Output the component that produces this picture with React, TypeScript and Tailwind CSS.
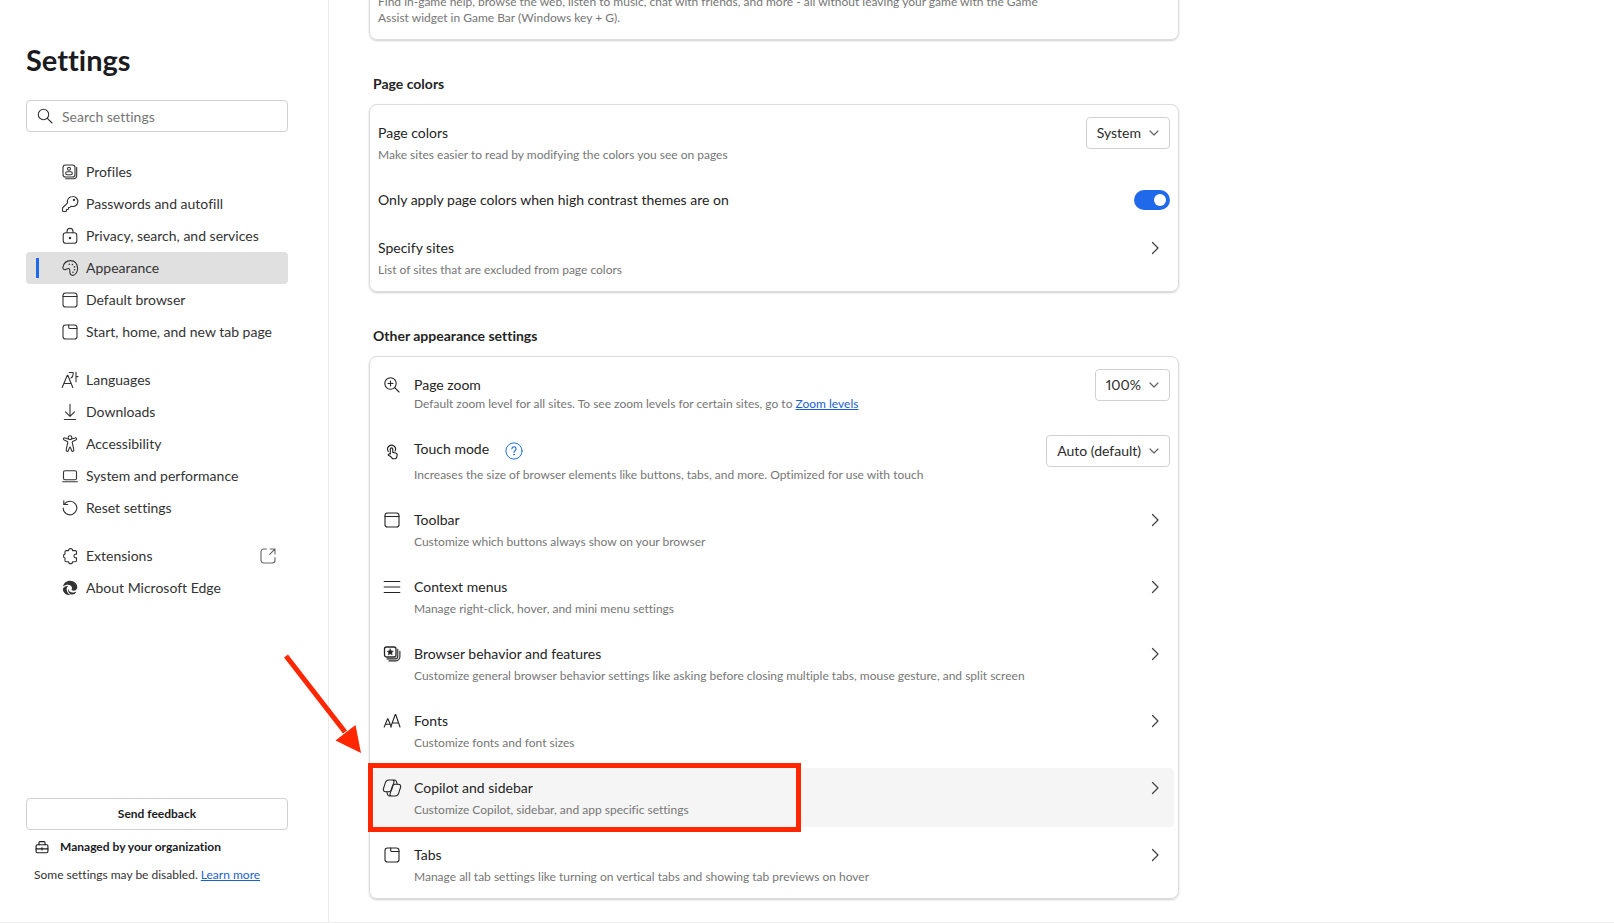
import type { ReactNode } from "react";

function Icon({ children, className = "size-5" }: { children: ReactNode; className?: string }) {
  return (
    <svg
      viewBox="0 0 20 20"
      className={`shrink-0 ${className}`}
      fill="none"
      stroke="currentColor"
      strokeWidth="1.1"
      strokeLinecap="round"
      strokeLinejoin="round"
      aria-hidden="true"
    >
      {children}
    </svg>
  );
}

const copilotHalf =
  "M7 2h3.300c1.600 0 2 1 1.600 2.400L9.700 11.600c-.4 1.400-1.300 2.100-2.700 2.100H3.800c-2 0-2.900-1.300-2.300-3.200L3.400 4.600C3.900 2.900 5.100 2 7 2ZM9.500 2h2.900c1.200 0 1.800.6 2.100 1.700l.7 2.600";

const icons = {
  search: (
    <>
      <circle cx="8.5" cy="8.5" r="5.2" />
      <path d="M12.4 12.4 17 17" />
    </>
  ),
  profiles: (
    <>
      <rect x="3" y="3" width="12" height="12" rx="2.6" />
      <path d="M16.7 5.2v8.3a3.2 3.2 0 0 1-3.2 3.2H5.6" />
      <circle cx="9" cy="6.8" r="1.5" />
      <rect x="5.7" y="9.7" width="6.6" height="3" rx="1.5" />
    </>
  ),
  key: (
    <>
      <path d="M12.4 2.5a5 5 0 0 0-4.8 6.4L2.9 13.5c-.3.3-.4.6-.4 1v2c0 .6.4 1 1 1h2c.5 0 1-.4 1-1v-1h1c.5 0 1-.4 1-1v-1h1c.3 0 .5-.1.7-.3l1-1A5 5 0 1 0 12.4 2.5Z" />
      <circle cx="14" cy="6" r=".6" fill="currentColor" />
    </>
  ),
  lock: (
    <>
      <rect x="3.2" y="6.8" width="13.6" height="10.5" rx="2.6" />
      <path d="M7 6.800V5.400a3 3 0 0 1 6 0v1.400" />
      <circle cx="10" cy="12" r=".7" fill="currentColor" />
    </>
  ),
  palette: (
    <>
      <path d="M2.800 9.600C3.600 5 7 2.600 10.600 2.600c4.400 0 7 3.400 7 7.600 0 4-2.400 7.200-5 7.200-2 0-2.700-1.400-2.700-3.300 0-1.600.2-3.100-1-3.500-1.400-.5-2.300 1-3.900 1-1.300 0-2.300-.7-2.200-2Z" />
      <g fill="currentColor" stroke="none">
        <circle cx="9.3" cy="6.3" r=".8" />
        <circle cx="12.4" cy="6.5" r=".8" />
        <circle cx="14.5" cy="8.9" r=".8" />
        <circle cx="14.5" cy="11.8" r=".8" />
        <circle cx="12.9" cy="14.2" r=".8" />
      </g>
    </>
  ),
  browser: (
    <>
      <rect x="3" y="3" width="14" height="14" rx="2.6" />
      <path d="M3 6.500h14" />
    </>
  ),
  tab: (
    <>
      <rect x="3" y="3" width="14" height="14" rx="2.6" />
      <path d="M8.700 3v2.200c0 .7.500 1.300 1.300 1.300h7" />
    </>
  ),
  language: (
    <>
      <path d="M2.200 17.500 7.300 5.200h.5l5 12.300M4 13.500h7.200" />
      <path d="M9.300 2.500h3.900v1.300c0 2-.7 3.300-2.200 4.200M16 2.200v9.500M16 6.600h2" />
    </>
  ),
  download: (
    <>
      <path d="M10 2.300v11.800M5.500 9.900 10 14.300l4.500-4.400" />
      <path d="M4.300 17.500h11.400" />
    </>
  ),
  accessibility: (
    <>
      <circle cx="10" cy="3.7" r="1.9" />
      <path d="M8.300 5 5.100 3.900c-1.500-.6-2.500 1.500-.9 2.200l3.100 1.300c.4.200.6.500.5 1L6.200 15.700c-.5 1.700 1.600 2.300 2.200.8l1.200-3.100c.1-.4.700-.4.800 0l1.200 3.100c.6 1.500 2.700.9 2.200-.8l-1.600-7.300c-.1-.5.100-.8.500-1l3.100-1.300c1.600-.7.600-2.800-.9-2.200L11.700 5" />
    </>
  ),
  laptop: (
    <>
      <rect x="3.5" y="4.7" width="13" height="9" rx="1.5" />
      <path d="M2.600 15.700h14.800" />
    </>
  ),
  reset: (
    <>
      <path d="M4.300 6.300A6.800 6.800 0 1 1 3.200 10" />
      <path d="M3.800 2.700v3.800h3.900" />
    </>
  ),
  puzzle: (
    <path d="M8.600 4.600a2 2 0 0 1 4 0h2.700c.7 0 1.200.5 1.200 1.200v2.500h-.8a1.800 1.800 0 0 0 0 3.600h.8v2.600c0 .7-.5 1.200-1.200 1.200h-2.700a2 2 0 0 1-4 0H6.200c-.7 0-1.200-.5-1.200-1.200V12a2 2 0 0 1 0-3.900V5.800c0-.7.500-1.200 1.200-1.200Z" />
  ),
  edge: (
    <g stroke="none" fill="currentColor">
      <path d="M3 8.600C3.600 5 6.500 2.700 10 2.700c4.400 0 7.300 3.200 7.300 6.400 0 2.200-1.700 3.700-3.700 3.700-1.400 0-2.300-.6-2.100-1.200.8-.8.700-2.700-.4-3.700C9 6 5.500 6.400 3 8.600Z" />
      <path d="M2.800 11c1-2.400 3.500-3.500 5.400-3-1.500 1.200-1.900 3.300-1.200 5.200.7 1.900 2.200 3.300 4 3.800-4 .7-8.100-1.800-8.200-6Z" />
      <path d="M8.100 10.700c.3 2.600 3 4.200 5.700 3.700 1-.2 1.900-.5 2.600-1-.7 1.600-2.200 3-4 3.200-2.700-.3-5-3-4.300-5.900Z" />
    </g>
  ),
  external: (
    <>
      <path d="M8.500 3H5.700A2.700 2.700 0 0 0 3 5.700v8.600A2.700 2.700 0 0 0 5.700 17h8.600a2.700 2.700 0 0 0 2.700-2.700v-2.800" />
      <path d="M12 3h5v5M17 3l-5.300 5.300" />
    </>
  ),
  briefcase: (
    <>
      <rect x="2.6" y="7.2" width="14.8" height="10" rx="1.5" strokeWidth="1.4" />
      <path
        d="M6.200 7.200V4.600c0-.8.500-1.300 1.300-1.300h5c.8 0 1.300.5 1.300 1.300v2.600M2.600 12.300h14.800M10 10.800v3"
        strokeWidth="1.4"
      />
    </>
  ),
  zoom: (
    <>
      <circle cx="8.5" cy="8.5" r="5.7" />
      <path d="M12.700 12.700 17 17M8.500 6v5M6 8.500h5" />
    </>
  ),
  touch: (
    <g transform="translate(1 2.200) scale(.88)" strokeWidth="1.3">
      <path d="M8.300 12.300V6.700a1.400 1.400 0 0 1 2.800 0v3.700l3.200.8c1.300.3 2 1.300 1.700 2.600l-.5 2.200c-.3 1.100-1 1.700-2 1.700h-1.600c-.7 0-1.200-.2-1.600-.8-1-1.500-2-2.300-3.700-2.900-.8-.3-.8-1.100-.2-1.500.6-.5 1.300-.5 1.900-.2Z" />
      <path d="M6 9.300a4.500 4.500 0 1 1 7.700-.4" />
    </g>
  ),
  menu: <path d="M2.200 4.500h15.600M2.200 10h15.600M2.200 15.500h15.600" strokeWidth="1.2" />,
  features: (
    <>
      <rect x="2.5" y="3" width="11.5" height="10" rx="2" strokeWidth="1.3" />
      <path d="M15.800 5.200v7a2.700 2.700 0 0 1-2.700 2.700H5M17.900 7.200v5.500a4.200 4.200 0 0 1-4.200 4.200H7" />
      <path
        d="m8.250 5 .9 1.900 2.100.3-1.500 1.500.4 2.100-1.900-1-1.900 1 .4-2.100-1.500-1.500 2.100-.3Z"
        fill="currentColor"
        strokeWidth=".6"
      />
    </>
  ),
  fonts: (
    <path d="M2.200 16 5.600 7.700h.3L9.300 16M3.400 13.200h4.700M8.700 16l4.600-12.500h.4L18 16M10.100 12h6.500" />
  ),
  copilot: (
    <>
      <path d={copilotHalf} />
      <path d={copilotHalf} transform="rotate(180 10 10)" />
    </>
  ),
  help: (
    <>
      <circle cx="10" cy="10" r="9" />
      <path d="M7.700 7.600a2.300 2.300 0 1 1 3.500 2c-.8.500-1.200 1-1.200 1.900" strokeWidth="1.3" />
      <circle cx="10" cy="14" r=".5" fill="currentColor" />
    </>
  ),
  chevronRight: <path d="m7.500 4.500 5.500 5.500-5.500 5.500" strokeWidth="1.3" />,
  chevronDown: <path d="m6 8 4 4 4-4" strokeWidth="1.2" />,
};

type IconName = keyof typeof icons;

const navGroups: { label: string; icon: IconName; external?: boolean }[][] = [
  [
    { label: "Profiles", icon: "profiles" },
    { label: "Passwords and autofill", icon: "key" },
    { label: "Privacy, search, and services", icon: "lock" },
    { label: "Appearance", icon: "palette" },
    { label: "Default browser", icon: "browser" },
    { label: "Start, home, and new tab page", icon: "tab" },
  ],
  [
    { label: "Languages", icon: "language" },
    { label: "Downloads", icon: "download" },
    { label: "Accessibility", icon: "accessibility" },
    { label: "System and performance", icon: "laptop" },
    { label: "Reset settings", icon: "reset" },
  ],
  [
    { label: "Extensions", icon: "puzzle", external: true },
    { label: "About Microsoft Edge", icon: "edge" },
  ],
];

function Sidebar() {
  return (
    <aside className="sticky top-0 flex h-[922px] max-h-screen w-[329px] shrink-0 flex-col border-r border-[#ebebeb] pr-10 pl-[26px]">
      <h1 className="mt-10 text-[29px] leading-10 font-bold text-[#1b1b1f]">Settings</h1>
      <div className="mt-5 flex h-8 shrink-0 items-center gap-[7px] rounded border border-[#d1d1d1] px-2">
        <Icon className="size-5 text-[#333]">{icons.search}</Icon>
        <input
          type="text"
          aria-label="Search settings"
          placeholder="Search settings"
          className="h-full min-w-0 flex-1 bg-transparent text-sm outline-none placeholder:text-[#767676]"
        />
      </div>
      <nav className="mt-6 flex flex-col gap-4">
        {navGroups.map((group, i) => (
          <ul key={i}>
            {group.map((item) => {
              const active = item.label === "Appearance";
              return (
                <li key={item.label}>
                  <a
                    href="#"
                    aria-current={active ? "page" : undefined}
                    className={`flex h-8 items-center rounded px-[10px] text-sm text-[#333] ${active ? "bg-[#e0e0e0]" : ""}`}
                  >
                    <span className={`h-5 w-[3px] ${active ? "bg-[#2169eb]" : ""}`} />
                    <Icon className="mr-[6px] ml-[21px] size-5">{icons[item.icon]}</Icon>
                    <span className="flex-1">{item.label}</span>
                    {item.external && <Icon className="size-5 text-[#666]">{icons.external}</Icon>}
                  </a>
                </li>
              );
            })}
          </ul>
        ))}
      </nav>
      <div className="mt-auto pb-[39px] text-xs text-[#1b1b1f]">
        <button type="button" className="h-8 w-full rounded border border-[#d1d1d1] font-bold">
          Send feedback
        </button>
        <div className="mt-[9px] flex items-center gap-[10px] pl-2 font-bold">
          <Icon className="size-4">{icons.briefcase}</Icon>
          Managed by your organization
        </div>
        <p className="mt-3 pl-2 text-[#333]">
          Some settings may be disabled.{" "}
          <a href="#" className="text-[#1a5fd0] underline">
            Learn more
          </a>
        </p>
      </div>
    </aside>
  );
}

function Card({ children, className = "pt-2 pb-1" }: { children: ReactNode; className?: string }) {
  return (
    <div
      className={`flex flex-col gap-2 rounded-lg border border-[#dcdcdc] px-1 shadow-[0_1px_2px_rgba(0,0,0,0.2)] ${className}`}
    >
      {children}
    </div>
  );
}

function Select({ id, label, options }: { id: string; label: string; options: string[] }) {
  return (
    <div className="relative shrink-0">
      <select
        id={id}
        aria-label={label}
        className="[field-sizing:content] h-8 appearance-none rounded border border-[#d1d1d1] bg-white pr-7 pl-[10px] text-sm text-[#2b2b2b] proportional-nums"
      >
        {options.map((option) => (
          <option key={option}>{option}</option>
        ))}
      </select>
      <Icon className="pointer-events-none absolute top-[6px] right-[6px] size-5 text-[#666]">
        {icons.chevronDown}
      </Icon>
    </div>
  );
}

const titleClass = "block text-sm leading-5 text-[#242424]";
const descClass = "block text-xs leading-4 text-[#767676]";

function LinkRow({
  icon,
  title,
  description,
  active,
  children,
}: {
  icon?: IconName;
  title: string;
  description: string;
  active?: boolean;
  children?: ReactNode;
}) {
  return (
    <div className="relative">
      <a
        href="#"
        className={`flex h-[59px] items-start rounded-sm pt-[10px] pr-[9px] ${icon ? "pl-2" : "pl-1"} ${active ? "bg-[#f5f5f5]" : ""}`}
      >
        {icon && <Icon className="mr-3 size-5 text-[#242424]">{icons[icon]}</Icon>}
        <span className="flex-1">
          <span className={titleClass}>{title}</span>
          <span className={`mt-1 ${descClass}`}>{description}</span>
        </span>
        <Icon className="size-5 text-[#444]">{icons.chevronRight}</Icon>
      </a>
      {children}
    </div>
  );
}

function Callout() {
  return (
    <>
      <div className="pointer-events-none absolute -top-[5px] -left-[6px] h-[69px] w-[433px] border-[5px] border-[#ff2600]" />
      <svg
        viewBox="0 0 80 102"
        className="pointer-events-none absolute -top-[116px] -left-[91px] h-[102px] w-[80px]"
        aria-hidden="true"
      >
        <path d="M3 4 62 80" stroke="#ff2600" strokeWidth="5" />
        <path d="M78 101 52.500 88.500 72.500 73Z" fill="#ff2600" />
      </svg>
    </>
  );
}

export default function App() {
  return (
    <div className="flex min-h-screen border-b border-[#ebebeb] bg-white font-['Lato','Liberation_Sans',sans-serif] [font-variant-ligatures:none]">
      <Sidebar />
      <main className="min-w-0 flex-1 pb-5 pl-10">
        <div className="max-w-[810px]">
          <div className="-mt-[14px]">
            <Card className="pt-[7px] pb-[13px]">
              <p className={`max-w-[690px] px-1 ${descClass}`}>
                Find in-game help, browse the web, listen to music, chat with friends, and more - all
                without leaving your game with the Game Assist widget in Game Bar (Windows key + G).
              </p>
            </Card>
          </div>

          <section>
            <h2 className="mt-[34px] mb-[10px] pl-1 text-sm leading-5 font-bold text-[#242424]">
              Page colors
            </h2>
            <Card>
              <div className="flex h-[59px] items-start px-1 pt-1">
                <label htmlFor="page-colors" className="flex-1 pt-[6px]">
                  <span className={titleClass}>Page colors</span>
                  <span className={`mt-1 ${descClass}`}>
                    Make sites easier to read by modifying the colors you see on pages
                  </span>
                </label>
                <Select id="page-colors" label="Page colors" options={["System", "Off", "Dusk", "Desert"]} />
              </div>
              <div className="flex h-10 items-center px-1">
                <label htmlFor="contrast-only" className={`flex-1 ${titleClass}`}>
                  Only apply page colors when high contrast themes are on
                </label>
                <input
                  id="contrast-only"
                  type="checkbox"
                  role="switch"
                  defaultChecked
                  className="flex h-5 w-9 appearance-none items-center rounded-full bg-[#8a8a8a] px-1 before:size-3 before:rounded-full before:bg-white checked:justify-end checked:bg-[#2169eb]"
                />
              </div>
              <LinkRow
                title="Specify sites"
                description="List of sites that are excluded from page colors"
              />
            </Card>
          </section>

          <section>
            <h2 className="mt-[34px] mb-[10px] pl-1 text-sm leading-5 font-bold text-[#242424]">
              Other appearance settings
            </h2>
            <Card>
              <div className="flex h-14 items-start pt-1 pr-1 pl-2">
                <Icon className="mt-[6px] mr-3 size-5 text-[#242424]">{icons.zoom}</Icon>
                <div className="flex-1 pt-[6px]">
                  <label htmlFor="page-zoom" className={titleClass}>
                    Page zoom
                  </label>
                  <p className={`mt-px ${descClass}`}>
                    Default zoom level for all sites. To see zoom levels for certain sites, go to{" "}
                    <a href="#" className="text-[#1a5fd0] underline">
                      Zoom levels
                    </a>
                  </p>
                </div>
                <Select id="page-zoom" label="Page zoom" options={["100%", "75%", "125%", "150%"]} />
              </div>
              <div className="flex h-[63px] items-start pt-[6px] pr-1 pl-2">
                <Icon className="mt-[6px] mr-3 size-5 text-[#242424]">{icons.touch}</Icon>
                <div className="flex-1 pt-1">
                  <div className="flex h-5 items-start gap-4">
                    <label htmlFor="touch-mode" className={titleClass}>
                      Touch mode
                    </label>
                    <button type="button" aria-label="Touch mode help" className="mt-[3px] text-[#1f6fd6]">
                      <Icon className="size-[18px]">{icons.help}</Icon>
                    </button>
                  </div>
                  <p className={`mt-2 ${descClass}`}>
                    Increases the size of browser elements like buttons, tabs, and more. Optimized for
                    use with touch
                  </p>
                </div>
                <Select id="touch-mode" label="Touch mode" options={["Auto (default)", "On", "Off"]} />
              </div>
              <LinkRow
                icon="browser"
                title="Toolbar"
                description="Customize which buttons always show on your browser"
              />
              <LinkRow
                icon="menu"
                title="Context menus"
                description="Manage right-click, hover, and mini menu settings"
              />
              <LinkRow
                icon="features"
                title="Browser behavior and features"
                description="Customize general browser behavior settings like asking before closing multiple tabs, mouse gesture, and split screen"
              />
              <LinkRow icon="fonts" title="Fonts" description="Customize fonts and font sizes" />
              <LinkRow
                icon="copilot"
                title="Copilot and sidebar"
                description="Customize Copilot, sidebar, and app specific settings"
                active
              >
                <Callout />
              </LinkRow>
              <LinkRow
                icon="tab"
                title="Tabs"
                description="Manage all tab settings like turning on vertical tabs and showing tab previews on hover"
              />
            </Card>
          </section>
        </div>
      </main>
    </div>
  );
}
